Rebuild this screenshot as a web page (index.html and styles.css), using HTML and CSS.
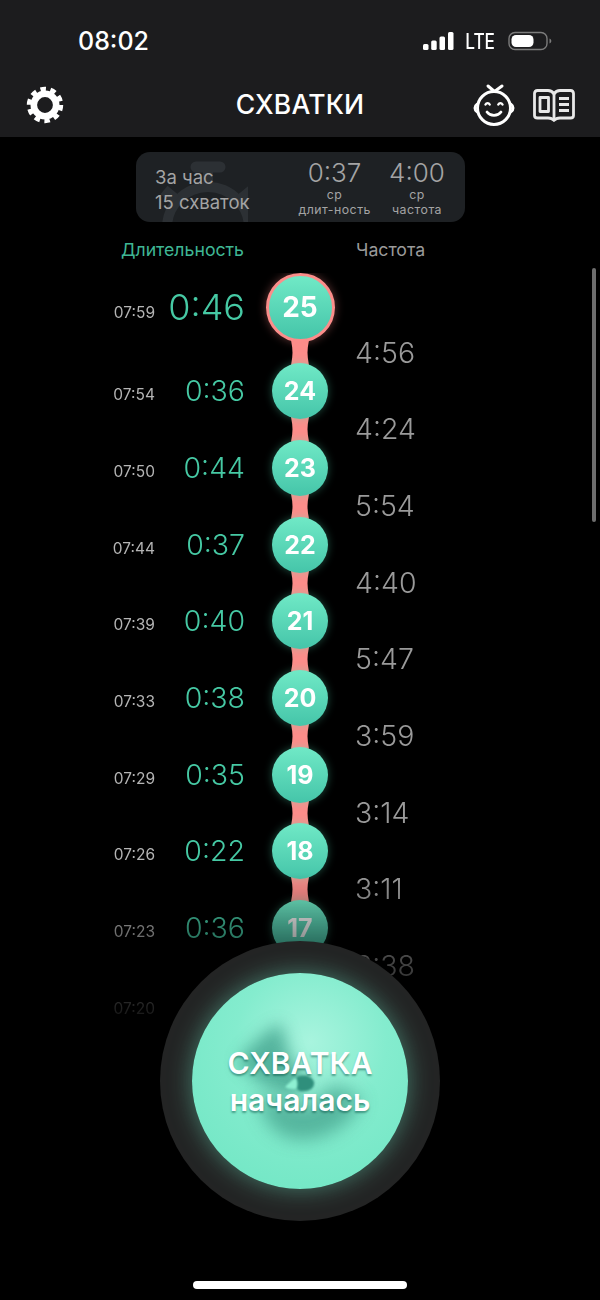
FILE: index.html
```html
<!DOCTYPE html>
<html lang="ru">
<head>
    <meta charset="UTF-8">
    <meta name="viewport" content="width=device-width, initial-scale=1.0">
    <title>Схватки</title>
    <link rel="stylesheet" href="styles.css">
</head>
<body>

    <div class="screen">
        <header class="top">
            <div class="status">
                <span class="clock">08:02</span>
                <div class="status-right">
                    <svg class="signal" width="31" height="18" viewBox="0 0 31 18">
                        <rect x="0" y="12" width="5.5" height="6" rx="1.5"/>
                        <rect x="8.2" y="8.5" width="5.5" height="9.5" rx="1.5"/>
                        <rect x="16.5" y="4.5" width="5.5" height="13.5" rx="1.5"/>
                        <rect x="25" y="0" width="5.5" height="18" rx="1.5"/>
                    </svg>
                    <span class="lte">LTE</span>
                    <svg class="battery" width="44" height="20" viewBox="0 0 44 20">
                        <rect x="1" y="1.5" width="38" height="17" rx="6" fill="none" stroke="#7c7c7c" stroke-width="1.4"/>
                        <rect x="3.5" y="4" width="22" height="12" rx="4.5" fill="#fff"/>
                        <path d="M41.5 7.5c1.2.4 1.8 1.3 1.8 2.5s-.6 2.1-1.8 2.5z" fill="#7c7c7c"/>
                    </svg>
                </div>
            </div>
            <nav class="nav">
                <svg class="gear" width="40" height="40" viewBox="0 0 40 40">
                    <circle cx="20" cy="20" r="11.2" fill="none" stroke="#fff" stroke-width="6.6"/>
                    <circle cx="20" cy="20" r="16" fill="none" stroke="#fff" stroke-width="4.4" stroke-dasharray="5.5 4.55"/>
                </svg>
                <h1 class="title">СХВАТКИ</h1>
                <div class="nav-icons">
                    <svg width="44" height="44" viewBox="0 0 44 44" fill="none" stroke="#fff" stroke-width="3" stroke-linecap="round">
                        <circle cx="22" cy="25" r="16.5"/>
                        <path d="M5 21c-3 2-3 6 0 8M39 21c3 2 3 6 0 8" stroke-width="2.5"/>
                        <path d="M16 3 22.500 8.500M30 3 22.500 8.500"/>
                        <path d="M13.5 21.500c1-1.800 3.200-1.800 4.200 0M26.300 21.500c1-1.800 3.200-1.800 4.200 0" stroke-width="2.4"/>
                        <path d="M15 29c3.500 4.600 10.500 4.600 14 0" stroke-width="2.8"/>
                    </svg>
                    <svg width="42" height="34" viewBox="0 0 42 34" fill="none" stroke="#e8e8e8" stroke-width="2.8" stroke-linejoin="round">
                        <path d="M21 6c-1.500-2.500-3-3.500-6-3.500H4.500Q1.500 2.500 1.500 5.500v22q0 2.500 3 2.500H15q4 0 6 2.500 2-2.500 6-2.500h10.500q3 0 3-2.500v-22q0-3-3-3H27c-3 0-4.500 1-6 3.500z"/>
                        <path d="M21 6v26"/>
                        <rect x="7" y="9.5" width="8.5" height="14"/>
                        <path d="M26 10.500h10M26 16.500h10M26 22.500h10"/>
                    </svg>
                </div>
            </nav>
        </header>

        <section class="summary">
            <svg class="watch" width="100" height="70" viewBox="0 0 100 70" fill="none" stroke="#2c3034" stroke-width="10">
                <path d="M48 15h24" stroke-width="11" stroke-linecap="round"/>
                <path d="M60 15v20"/>
                <circle cx="60" cy="76" r="41"/>
                <path d="M92 48l12-10M28 48 16 38" stroke-width="11"/>
            </svg>
            <div class="summary-text">
                <div>За час</div>
                <div>15 схваток</div>
            </div>
            <div class="avg avg-long">
                <div class="avg-val">0:37</div>
                <div class="avg-sub">ср<br>длит-ность</div>
            </div>
            <div class="avg">
                <div class="avg-val">4:00</div>
                <div class="avg-sub">ср<br>частота</div>
            </div>
        </section>

        <div class="heads">
            <span class="head-dur">Длительность</span>
            <span class="head-freq">Частота</span>
        </div>

        <div class="timeline">
            <div class="rows">
                <div class="row row-now">
                    <span class="time">07:59</span><span class="dur">0:46</span>
                    <div class="stem"><div class="dot">25</div><svg class="link" width="30" height="24" viewBox="0 0 30 24" preserveAspectRatio="none"><path d="M6 0Q7.500 7 7.500 12T6 24H24Q22.500 17 22.500 12T24 0Z"/></svg></div>
                </div>
                <div class="row">
                    <span class="time">07:54</span><span class="dur">0:36</span>
                    <div class="stem"><div class="dot">24</div><svg class="link" width="30" height="24" viewBox="0 0 30 24" preserveAspectRatio="none"><path d="M6 0Q7.500 7 7.500 12T6 24H24Q22.500 17 22.500 12T24 0Z"/></svg></div>
                </div>
                <div class="row">
                    <span class="time">07:50</span><span class="dur">0:44</span>
                    <div class="stem"><div class="dot">23</div><svg class="link" width="30" height="24" viewBox="0 0 30 24" preserveAspectRatio="none"><path d="M6 0Q7.500 7 7.500 12T6 24H24Q22.500 17 22.500 12T24 0Z"/></svg></div>
                </div>
                <div class="row">
                    <span class="time">07:44</span><span class="dur">0:37</span>
                    <div class="stem"><div class="dot">22</div><svg class="link" width="30" height="24" viewBox="0 0 30 24" preserveAspectRatio="none"><path d="M6 0Q7.500 7 7.500 12T6 24H24Q22.500 17 22.500 12T24 0Z"/></svg></div>
                </div>
                <div class="row">
                    <span class="time">07:39</span><span class="dur">0:40</span>
                    <div class="stem"><div class="dot">21</div><svg class="link" width="30" height="24" viewBox="0 0 30 24" preserveAspectRatio="none"><path d="M6 0Q7.500 7 7.500 12T6 24H24Q22.500 17 22.500 12T24 0Z"/></svg></div>
                </div>
                <div class="row">
                    <span class="time">07:33</span><span class="dur">0:38</span>
                    <div class="stem"><div class="dot">20</div><svg class="link" width="30" height="24" viewBox="0 0 30 24" preserveAspectRatio="none"><path d="M6 0Q7.500 7 7.500 12T6 24H24Q22.500 17 22.500 12T24 0Z"/></svg></div>
                </div>
                <div class="row">
                    <span class="time">07:29</span><span class="dur">0:35</span>
                    <div class="stem"><div class="dot">19</div><svg class="link" width="30" height="24" viewBox="0 0 30 24" preserveAspectRatio="none"><path d="M6 0Q7.500 7 7.500 12T6 24H24Q22.500 17 22.500 12T24 0Z"/></svg></div>
                </div>
                <div class="row">
                    <span class="time">07:26</span><span class="dur">0:22</span>
                    <div class="stem"><div class="dot">18</div><svg class="link" width="30" height="24" viewBox="0 0 30 24" preserveAspectRatio="none"><path d="M6 0Q7.500 7 7.500 12T6 24H24Q22.500 17 22.500 12T24 0Z"/></svg></div>
                </div>
                <div class="row">
                    <span class="time">07:23</span><span class="dur">0:36</span>
                    <div class="stem"><div class="dot">17</div></div>
                </div>
                <div class="row">
                    <span class="time">07:20</span>
                </div>
            </div>
            <div class="freqs">
                <div class="freq">4:56</div>
                <div class="freq">4:24</div>
                <div class="freq">5:54</div>
                <div class="freq">4:40</div>
                <div class="freq">5:47</div>
                <div class="freq">3:59</div>
                <div class="freq">3:14</div>
                <div class="freq">3:11</div>
                <div class="freq">3:38</div>
            </div>
        </div>

        <div class="scrollbar"></div>

        <div class="start">
            <div class="start-btn">
                <svg class="baby" width="216" height="216" viewBox="0 0 216 216">
                    <path class="b1" d="M88 50C97 70 92 88 114 100L106 124C80 120 60 106 46 90 55 74 72 60 88 50z"/>
                    <path class="b2" d="M66 124C85 120 105 136 118 133 128 126 134 113 144 113 152 113 160 120 170 128 162 150 130 172 100 166 80 160 70 146 66 124z"/>
                    <path class="b3" d="M105 104C112 101 120 103 122 109 123 116 116 119 108 118 103 116 102 108 105 104z"/>
                    <path class="b4" d="M93 114C97 110 101 106 104 105 106 109 106 113 104 116 100 116 96 116 93 114z"/>
                </svg>
                <div class="start-text">СХВАТКА<br>началась</div>
            </div>
        </div>

        <div class="home"></div>
    </div>

</body>
</html>
```

FILE: styles.css
```css
* {
    box-sizing: border-box;
}
body {
    margin: 0;
    background: #000;
    font-family: Inter, "Noto Sans", sans-serif;
}
.screen {
    position: relative;
    width: 600px;
    height: 1300px;
    overflow: hidden;
    background: #000;
}

/* шапка */
.top {
    height: 137px;
    background: #1c1c1e;
    color: #fff;
}
.status {
    display: flex;
    justify-content: space-between;
    align-items: center;
    height: 82px;
    padding: 0 50px 0 78px;
}
.clock {
    font-size: 25px;
    font-weight: 500;
}
.status-right {
    display: flex;
    align-items: center;
    gap: 11px;
}
.signal {
    fill: #fff;
}
.lte {
    font-size: 21px;
    font-weight: 500;
    transform: scaleX(0.82);
    margin: 0 -3px;
}
.battery {
    margin-left: 2px;
    margin-right: -2px;
}
.nav {
    display: grid;
    grid-template-columns: 1fr auto 1fr;
    align-items: center;
    height: 44px;
    padding: 0 25px;
    margin-top: 1px;
}
.title {
    margin: 0;
    padding-bottom: 3px;
    font-size: 26.5px;
    font-weight: 500;
    letter-spacing: 0.2px;
}
.nav-icons {
    display: flex;
    justify-content: flex-end;
    align-items: center;
    gap: 17px;
}

/* карточка со статистикой */
.summary {
    position: relative;
    display: flex;
    align-items: flex-start;
    width: 329px;
    height: 70px;
    margin: 15px 0 0 136px;
    padding-left: 19px;
    border-radius: 14px;
    background: #1e2124;
    overflow: hidden;
    color: #a4a4a4;
}
.watch {
    position: absolute;
    left: 12px;
    top: 0;
}
.summary-text {
    position: relative;
    width: 143.5px;
    padding-top: 13px;
    font-size: 18.5px;
    line-height: 24.5px;
}
.avg {
    position: relative;
    width: 72px;
    margin-left: 10.5px;
    text-align: center;
}
.avg-long {
    margin-left: 0;
}
.avg-val {
    font-size: 26px;
    font-weight: 300;
    line-height: 28px;
    margin-top: 7px;
}
.avg-sub {
    font-size: 12.3px;
    line-height: 15px;
    letter-spacing: 0.5px;
    white-space: nowrap;
}

/* заголовки колонок */
.heads {
    display: flex;
    height: 24px;
    margin-top: 16px;
    font-size: 17.7px;
    line-height: 24px;
}
.head-dur {
    width: 244px;
    text-align: right;
    color: #3fb795;
}
.head-freq {
    margin-left: 112px;
    color: #9a9a9a;
}

/* лента схваток */
.timeline {
    display: flex;
    margin-top: 11px;
    -webkit-mask-image: linear-gradient(to bottom, #000 600px, rgba(0, 0, 0, 0.55) 670px, rgba(0, 0, 0, 0.12) 745px, transparent 770px);
    mask-image: linear-gradient(to bottom, #000 600px, rgba(0, 0, 0, 0.55) 670px, rgba(0, 0, 0, 0.12) 745px, transparent 770px);
}
.row {
    display: grid;
    grid-template-columns: 155px 90px 110px;
    align-items: start;
    min-height: 76.7px;
}
.time {
    height: 56px;
    line-height: 64px;
    text-align: right;
    font-size: 15.5px;
    color: #b4b4b4;
}
.dur {
    height: 56px;
    line-height: 56px;
    text-align: right;
    font-size: 28.5px;
    font-weight: 300;
    color: #46c9a4;
}
.stem {
    display: flex;
    flex-direction: column;
    align-items: center;
}
.dot {
    position: relative;
    z-index: 1;
    width: 56px;
    height: 56px;
    border-radius: 50%;
    background: linear-gradient(to bottom, #70e9c6, #45c5a9);
    box-shadow: 0 0 9px rgba(90, 225, 185, 0.35);
    color: #fff;
    font-size: 25px;
    font-weight: 700;
    line-height: 56px;
    text-align: center;
}
.link {
    display: block;
    height: 24.7px;
    margin: -2px 0;
    fill: #fc8d8a;
}
.row-now .time,
.row-now .dur {
    height: 69px;
    line-height: 69px;
}
.row-now .time {
    line-height: 80px;
}
.row-now .dur {
    font-size: 36px;
}
.row-now .dot {
    width: 69px;
    height: 69px;
    border: 3px solid #fc8d8a;
    font-size: 28px;
    line-height: 63px;
    box-shadow: 0 0 10px rgba(252, 141, 138, 0.4);
}
.row-now .link {
    height: 25.3px;
}
.freqs {
    padding-top: 41.6px;
    font-size: 28.5px;
    font-weight: 300;
    color: #9a9a9a;
}
.freq {
    height: 76.7px;
    line-height: 76.7px;
}

.scrollbar {
    position: absolute;
    left: 592px;
    top: 268px;
    width: 4px;
    height: 254px;
    border-radius: 2px;
    background: #6e6e6e;
}

/* большая кнопка */
.start {
    position: absolute;
    left: 160px;
    top: 941px;
    display: flex;
    justify-content: center;
    align-items: center;
    width: 280px;
    height: 280px;
    border-radius: 50%;
    background: #232424;
}
.start-btn {
    position: relative;
    width: 216px;
    height: 216px;
    border-radius: 50%;
    overflow: hidden;
    background: radial-gradient(circle at 55% 32%, #a8f4de 0%, #84ecce 40%, #6de5c2 100%);
}
.start::after {
    content: "";
    position: absolute;
    left: 32px;
    top: 32px;
    width: 216px;
    height: 216px;
    border-radius: 50%;
    box-shadow: 0 0 24px rgba(110, 230, 195, 0.45);
}
.baby {
    position: absolute;
    left: 0;
    top: 0;
}
.b1 {
    fill: #3f9f8a;
    filter: blur(8px);
    opacity: 0.75;
}
.b2 {
    fill: #4aa892;
    filter: blur(9px);
    opacity: 0.8;
}
.b3 {
    fill: #2f8f7c;
    filter: blur(1px);
}
.b4 {
    fill: #8ef0d2;
    filter: blur(1px);
}
.start-text {
    position: relative;
    display: flex;
    flex-direction: column;
    justify-content: center;
    height: 100%;
    padding-top: 2px;
    text-align: center;
    color: #fff;
    font-size: 30px;
    font-weight: 600;
    line-height: 37px;
    text-shadow: 0 2px 2px rgba(0, 70, 60, 0.45);
}

.home {
    position: absolute;
    left: 193px;
    top: 1281px;
    width: 214px;
    height: 8px;
    border-radius: 4px;
    background: #fff;
}
```
